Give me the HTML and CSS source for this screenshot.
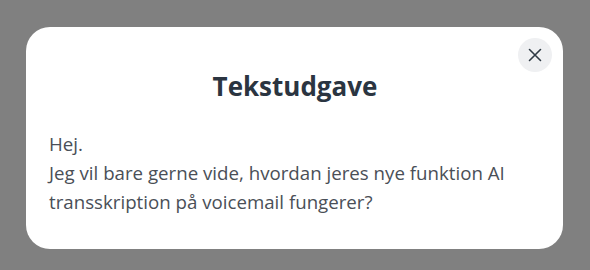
FILE: index.html
```html
<!DOCTYPE html>
<html lang="da">
<head>
<meta charset="utf-8">
<link rel="stylesheet" href="styles.css">
</head>
<body>
<div class="backdrop">
  <div class="modal">
    <button class="close" aria-label="Luk">
      <svg width="14" height="14" viewBox="0 0 14 14"><path d="M1.5 1.5L12.5 12.5M12.5 1.5L1.5 12.5" stroke="#2f3a45" stroke-width="1.6" stroke-linecap="round" fill="none"/></svg>
    </button>
    <h1 class="title">Tekstudgave</h1>
    <p class="body">Hej.<br>Jeg vil bare gerne vide, hvordan jeres nye funktion AI transskription på voicemail fungerer?</p>
  </div>
</div>
</body>
</html>
```
FILE: styles.css
```css
html, body {
  margin: 0;
  padding: 0;
  background: #808080;
  width: 590px;
  height: 270px;
  overflow: hidden;
}
.backdrop {
  padding: 27px 27px 0 26px;
}
.modal {
  position: relative;
  box-sizing: border-box;
  width: 537px;
  height: 222px;
  background: #fff;
  border-radius: 24px;
  padding: 40px 22px 0 23px;
  font-family: "Open Sans", "Noto Sans", sans-serif;
}
.close {
  position: absolute;
  top: 11px;
  right: 11px;
  width: 34px;
  height: 34px;
  border-radius: 50%;
  border: none;
  background: #eff0f2;
  display: flex;
  align-items: center;
  justify-content: center;
  padding: 0;
}
.title {
  margin: 0;
  text-align: center;
  font-size: 26px;
  line-height: 38px;
  font-weight: 700;
  color: #2b3541;
}
.body {
  margin: 24px 0 0;
  font-size: 18.7px;
  line-height: 29px;
  color: #4a4f57;
}
```
